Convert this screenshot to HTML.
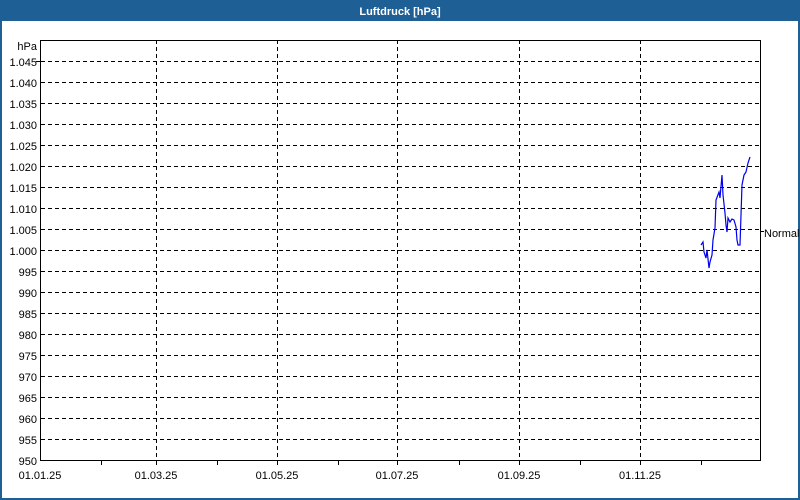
<!DOCTYPE html>
<html><head><style>
html,body{margin:0;padding:0;width:800px;height:500px;overflow:hidden;background:#fff}
svg{display:block}
text{font-family:"Liberation Sans",sans-serif;font-size:11px;fill:#000}
</style></head><body>
<svg width="800" height="500" xmlns="http://www.w3.org/2000/svg">
<rect x="0" y="0" width="800" height="500" fill="#1e5f96"/>
<rect x="2" y="21" width="796" height="477" fill="#fff"/>
<text x="400" y="15" text-anchor="middle" style="font-weight:bold;fill:#fff">Luftdruck [hPa]</text>
<g stroke="#000" stroke-width="1" stroke-dasharray="4,3" shape-rendering="crispEdges">
<line x1="41" x2="760" y1="61.5" y2="61.5"/><line x1="41" x2="760" y1="82.5" y2="82.5"/>
<line x1="41" x2="760" y1="103.5" y2="103.5"/><line x1="41" x2="760" y1="124.5" y2="124.5"/>
<line x1="41" x2="760" y1="145.5" y2="145.5"/><line x1="41" x2="760" y1="166.5" y2="166.5"/>
<line x1="41" x2="760" y1="187.5" y2="187.5"/><line x1="41" x2="760" y1="208.5" y2="208.5"/>
<line x1="41" x2="760" y1="229.5" y2="229.5"/><line x1="41" x2="760" y1="250.5" y2="250.5"/>
<line x1="41" x2="760" y1="271.5" y2="271.5"/><line x1="41" x2="760" y1="292.5" y2="292.5"/>
<line x1="41" x2="760" y1="313.5" y2="313.5"/><line x1="41" x2="760" y1="334.5" y2="334.5"/>
<line x1="41" x2="760" y1="355.5" y2="355.5"/><line x1="41" x2="760" y1="376.5" y2="376.5"/>
<line x1="41" x2="760" y1="397.5" y2="397.5"/><line x1="41" x2="760" y1="418.5" y2="418.5"/>
<line x1="41" x2="760" y1="439.5" y2="439.5"/>
<line x1="156.5" x2="156.5" y1="40" y2="460"/><line x1="277.5" x2="277.5" y1="40" y2="460"/>
<line x1="397.5" x2="397.5" y1="40" y2="460"/><line x1="519.5" x2="519.5" y1="40" y2="460"/>
<line x1="640.5" x2="640.5" y1="40" y2="460"/>
</g>
<g stroke="#000" stroke-width="1" fill="none" shape-rendering="crispEdges">
<path d="M40.5 40.5 H760.5 V460.5 H40.5 Z"/>
<line x1="36" x2="40" y1="61.5" y2="61.5"/>
<path d="M101.5 461v4M217.5 461v4M338.5 461v4M459.5 461v4M580.5 461v4M701.5 461v4M156.5 461v4M277.5 461v4M397.5 461v4M519.5 461v4M640.5 461v4M761 231.5h3"/>
</g>
<g text-anchor="end">
<text x="37" y="50">hPa</text>
<text x="37" y="66">1.045</text><text x="37" y="87">1.040</text><text x="37" y="108">1.035</text>
<text x="37" y="129">1.030</text><text x="37" y="150">1.025</text><text x="37" y="171">1.020</text>
<text x="37" y="192">1.015</text><text x="37" y="213">1.010</text><text x="37" y="234">1.005</text>
<text x="37" y="255">1.000</text><text x="37" y="276">995</text><text x="37" y="297">990</text>
<text x="37" y="318">985</text><text x="37" y="339">980</text><text x="37" y="360">975</text>
<text x="37" y="381">970</text><text x="37" y="402">965</text><text x="37" y="423">960</text>
<text x="37" y="444">955</text><text x="37" y="465">950</text>
</g>
<g text-anchor="middle">
<text x="40" y="479">01.01.25</text><text x="156" y="479">01.03.25</text>
<text x="277" y="479">01.05.25</text><text x="397" y="479">01.07.25</text>
<text x="519" y="479">01.09.25</text><text x="640" y="479">01.11.25</text>
</g>
<text x="764" y="237">Normal</text>
<polyline fill="none" stroke="#0000ee" stroke-width="1.2" points="701,245 703,242 704,252 706,258 707,250 709,268 710,262 712,255 713,240 715,228 716,200 719,192 720,198 722,175 723,195 725,213 726,225 727,232 728,218 730,222 732,219 734,220 736,227 737,240 738,245 740,245 741,215 742,185 744,175 746,172 748,163 750,157"/>
</svg>
</body></html>
